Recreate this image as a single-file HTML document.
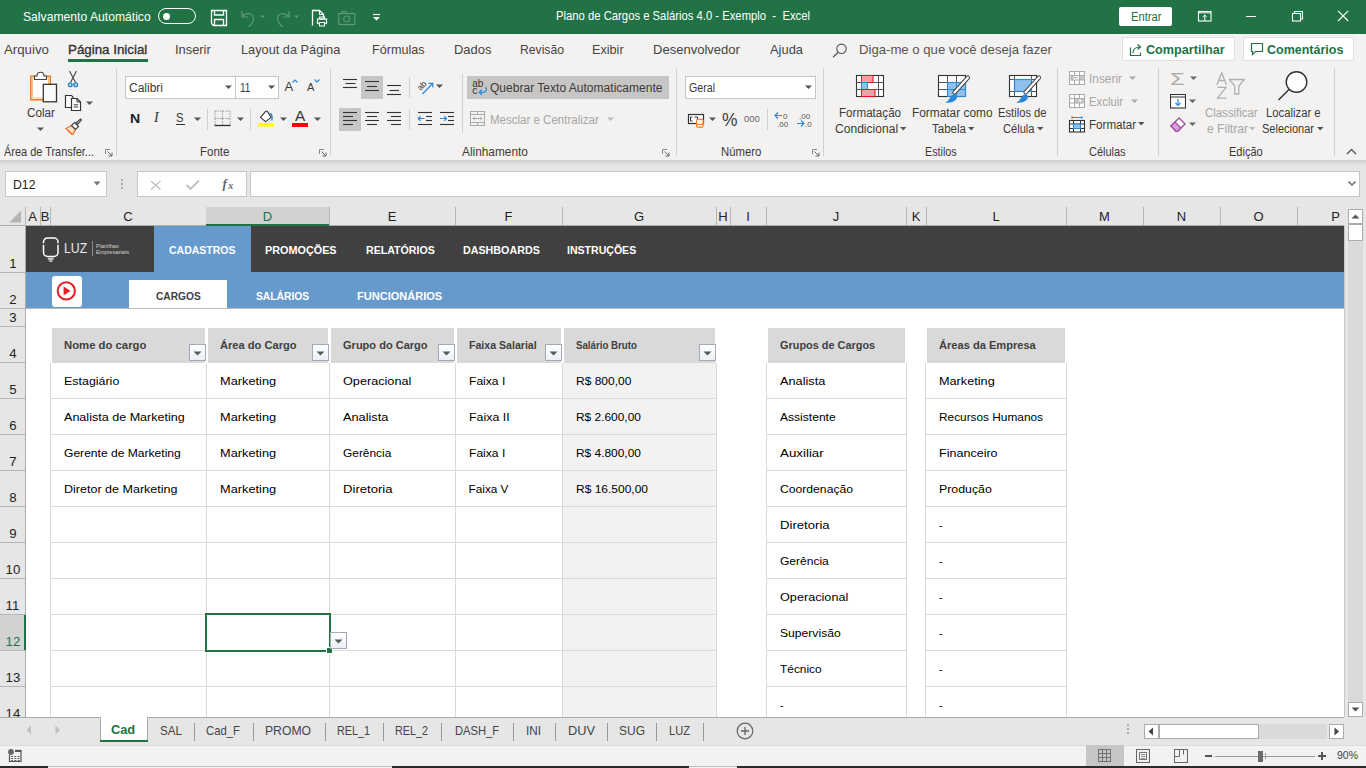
<!DOCTYPE html>
<html><head><meta charset="utf-8"><title>Excel</title>
<style>
html,body{margin:0;padding:0;width:1366px;height:768px;overflow:hidden;position:relative;background:#f3f2f1;font-family:"Liberation Sans",sans-serif}
body>div,body>svg,body>span{position:absolute;box-sizing:border-box}
.t{white-space:pre;line-height:1;transform-origin:0 0}

</style></head><body>
<div style="left:0px;top:0px;width:1366px;height:34px;background:#217346"></div>
<span class="t" style="left:23.00px;top:11.19px;font-size:12.60px;color:#fff;font-weight:400;font-family:'Liberation Sans',sans-serif;transform:scaleX(0.9651);">Salvamento Automático</span>
<div style="left:158px;top:8px;width:38px;height:16px;border:1.3px solid #fff;border-radius:8px"></div>
<div style="left:162.5px;top:12.5px;width:7px;height:7px;background:#fff;border-radius:50%"></div>
<svg style="left:210px;top:9px;" width="18" height="18" viewBox="0 0 18 18"><path d="M1.5 1.5h15v15h-13l-2-2z" fill="none" stroke="#fff" stroke-width="1.3"/><path d="M4.5 1.5v4.5h9v-4.5M4.5 16.5v-6h9v6" fill="none" stroke="#fff" stroke-width="1.3"/></svg>
<svg style="left:239px;top:9px;" width="30" height="18" viewBox="0 0 30 18"><path d="M3 2v6h6" fill="none" stroke="#5e9a76" stroke-width="1.2"/><path d="M3.5 7.5c3-4 10-4 11 1.5 0.5 3-1 5-5 9" fill="none" stroke="#5e9a76" stroke-width="1.2"/><path d="M21 6.5l2.5 2.5 2.5-2.5z" fill="#5e9a76"/></svg>
<svg style="left:274px;top:9px;" width="30" height="18" viewBox="0 0 30 18"><path d="M15 2v6h-6" fill="none" stroke="#5e9a76" stroke-width="1.2"/><path d="M14.5 7.5c-3-4 -10-4 -11 1.5 -0.5 3 1 5 5 9" fill="none" stroke="#5e9a76" stroke-width="1.2"/><path d="M20 6.5l2.5 2.5 2.5-2.5z" fill="#5e9a76"/></svg>
<svg style="left:311px;top:9px;" width="17" height="18" viewBox="0 0 17 18"><path d="M1.5 16.5v-15h7l4 4v3" fill="none" stroke="#fff" stroke-width="1.3"/><path d="M8.5 1.5v4h4" fill="none" stroke="#fff" stroke-width="1.1"/><rect x="6.5" y="10" width="9" height="4.5" fill="none" stroke="#fff" stroke-width="1.2"/><rect x="8.5" y="8" width="5" height="2" fill="none" stroke="#fff" stroke-width="1"/><rect x="8.5" y="13.5" width="5" height="3.5" fill="#217346" stroke="#fff" stroke-width="1"/></svg>
<svg style="left:338px;top:10px;" width="18" height="16" viewBox="0 0 18 16"><rect x="0.7" y="3.5" width="16" height="11" fill="none" stroke="#5e9a76" stroke-width="1.2"/><circle cx="8.7" cy="9" r="3" fill="none" stroke="#5e9a76" stroke-width="1.2"/><path d="M4 3.5v-2h4v2" fill="none" stroke="#5e9a76" stroke-width="1.1"/></svg>
<svg style="left:372px;top:13px;" width="10" height="8" viewBox="0 0 10 8"><path d="M1 1.5h7" stroke="#fff" stroke-width="1.2"/><path d="M1 4l3.5 3.5 3.5-3.5z" fill="#fff"/></svg>
<span class="t" style="left:555.50px;top:10.22px;font-size:12.80px;color:#fff;font-weight:400;font-family:'Liberation Sans',sans-serif;transform:scaleX(0.8817);">Plano de Cargos e Salários 4.0 - Exemplo  -  Excel</span>
<div style="left:1119px;top:7px;width:53px;height:19px;background:#fff;border-radius:2px"></div>
<span class="t" style="left:1130.50px;top:11.04px;font-size:12.30px;color:#217346;font-weight:400;font-family:'Liberation Sans',sans-serif;transform:scaleX(0.9104);">Entrar</span>
<svg style="left:1197px;top:10px;" width="16" height="12" viewBox="0 0 16 12"><rect x="1.5" y="1.5" width="12.5" height="9.5" fill="none" stroke="#fff" stroke-width="1.1"/><path d="M1.5 2.8h12.5" stroke="#fff" stroke-width="1"/><path d="M7.75 11v-6M5.7 7l2.05-2 2.05 2" fill="none" stroke="#fff" stroke-width="1"/></svg>
<div style="left:1246px;top:16px;width:10px;height:1.2px;background:#fff"></div>
<svg style="left:1291px;top:10px;" width="13" height="12" viewBox="0 0 13 12"><rect x="1.5" y="3.5" width="8" height="7.5" fill="none" stroke="#fff" stroke-width="1.1"/><path d="M3.5 3.5v-2h8v7.5h-2" fill="none" stroke="#fff" stroke-width="1.1"/></svg>
<svg style="left:1337px;top:10px;" width="12" height="12" viewBox="0 0 12 12"><path d="M1 0.8l10.2 10.2M11.2 0.8L1 11" stroke="#fff" stroke-width="1.1"/></svg>
<span class="t" style="left:68.30px;top:42.99px;font-size:13.30px;color:#333;font-weight:400;font-family:'Liberation Sans',sans-serif;transform:scaleX(1.0026);-webkit-text-stroke:0.35px #333">Página Inicial</span>
<span class="t" style="left:3.70px;top:42.99px;font-size:13.30px;color:#444;font-weight:400;font-family:'Liberation Sans',sans-serif;transform:scaleX(0.9957);">Arquivo</span>
<span class="t" style="left:175.30px;top:42.99px;font-size:13.30px;color:#444;font-weight:400;font-family:'Liberation Sans',sans-serif;transform:scaleX(0.9661);">Inserir</span>
<span class="t" style="left:241.40px;top:42.99px;font-size:13.30px;color:#444;font-weight:400;font-family:'Liberation Sans',sans-serif;transform:scaleX(0.9593);">Layout da Página</span>
<span class="t" style="left:371.90px;top:42.99px;font-size:13.30px;color:#444;font-weight:400;font-family:'Liberation Sans',sans-serif;transform:scaleX(0.9509);">Fórmulas</span>
<span class="t" style="left:454.40px;top:42.99px;font-size:13.30px;color:#444;font-weight:400;font-family:'Liberation Sans',sans-serif;transform:scaleX(0.9730);">Dados</span>
<span class="t" style="left:519.50px;top:42.99px;font-size:13.30px;color:#444;font-weight:400;font-family:'Liberation Sans',sans-serif;transform:scaleX(0.9158);">Revisão</span>
<span class="t" style="left:592.00px;top:42.99px;font-size:13.30px;color:#444;font-weight:400;font-family:'Liberation Sans',sans-serif;transform:scaleX(0.9504);">Exibir</span>
<span class="t" style="left:653.20px;top:42.99px;font-size:13.30px;color:#444;font-weight:400;font-family:'Liberation Sans',sans-serif;transform:scaleX(0.9797);">Desenvolvedor</span>
<span class="t" style="left:769.70px;top:42.99px;font-size:13.30px;color:#444;font-weight:400;font-family:'Liberation Sans',sans-serif;transform:scaleX(0.9701);">Ajuda</span>
<div style="left:68px;top:59px;width:80px;height:3px;background:#217346"></div>
<svg style="left:832px;top:43px;" width="16" height="15" viewBox="0 0 16 15"><circle cx="9.5" cy="5.8" r="4.7" fill="none" stroke="#555" stroke-width="1.1"/><path d="M6.2 9.2L1 14.2" stroke="#555" stroke-width="1.2"/></svg>
<span class="t" style="left:859.40px;top:42.99px;font-size:13.30px;color:#555;font-weight:400;font-family:'Liberation Sans',sans-serif;transform:scaleX(0.9885);">Diga-me o que você deseja fazer</span>
<div style="left:1122px;top:37px;width:113px;height:24px;background:#fff;border:1px solid #e1dfdd;border-radius:2px"></div>
<svg style="left:1129px;top:42px;" width="14" height="15" viewBox="0 0 14 15"><path d="M1.5 5.5v8h10v-3" fill="none" stroke="#217346" stroke-width="1.2"/><path d="M4 11c0-4 3-6 7-6M8.5 2.5l3 2.5-3 2.5" fill="none" stroke="#217346" stroke-width="1.2"/></svg>
<span class="t" style="left:1146.00px;top:42.94px;font-size:13.60px;color:#217346;font-weight:700;font-family:'Liberation Sans',sans-serif;transform:scaleX(0.9290);">Compartilhar</span>
<div style="left:1243px;top:37px;width:111px;height:24px;background:#fff;border:1px solid #e1dfdd;border-radius:2px"></div>
<svg style="left:1250px;top:42px;" width="14" height="14" viewBox="0 0 14 14"><path d="M1.5 1.5h11v8h-7l-3 3v-3h-1z" fill="none" stroke="#217346" stroke-width="1.2"/></svg>
<span class="t" style="left:1267.00px;top:42.94px;font-size:13.60px;color:#217346;font-weight:700;font-family:'Liberation Sans',sans-serif;transform:scaleX(0.9194);">Comentários</span>
<div style="left:116px;top:68px;width:1px;height:88px;background:#d2d0ce"></div>
<div style="left:330px;top:68px;width:1px;height:88px;background:#d2d0ce"></div>
<div style="left:676px;top:68px;width:1px;height:88px;background:#d2d0ce"></div>
<div style="left:823px;top:68px;width:1px;height:88px;background:#d2d0ce"></div>
<div style="left:1057px;top:68px;width:1px;height:88px;background:#d2d0ce"></div>
<div style="left:1158px;top:68px;width:1px;height:88px;background:#d2d0ce"></div>
<div style="left:1334px;top:68px;width:1px;height:88px;background:#d2d0ce"></div>
<span class="t" style="left:4.00px;top:146.04px;font-size:12.30px;color:#3b3a39;font-weight:400;font-family:'Liberation Sans',sans-serif;transform:scaleX(0.8896);">Área de Transfer...</span>
<span class="t" style="left:200.30px;top:146.04px;font-size:12.30px;color:#3b3a39;font-weight:400;font-family:'Liberation Sans',sans-serif;transform:scaleX(0.9347);">Fonte</span>
<span class="t" style="left:461.80px;top:146.04px;font-size:12.30px;color:#3b3a39;font-weight:400;font-family:'Liberation Sans',sans-serif;transform:scaleX(0.9638);">Alinhamento</span>
<span class="t" style="left:721.40px;top:146.04px;font-size:12.30px;color:#3b3a39;font-weight:400;font-family:'Liberation Sans',sans-serif;transform:scaleX(0.9234);">Número</span>
<span class="t" style="left:924.70px;top:146.04px;font-size:12.30px;color:#3b3a39;font-weight:400;font-family:'Liberation Sans',sans-serif;transform:scaleX(0.8725);">Estilos</span>
<span class="t" style="left:1089.00px;top:146.04px;font-size:12.30px;color:#3b3a39;font-weight:400;font-family:'Liberation Sans',sans-serif;transform:scaleX(0.8923);">Células</span>
<span class="t" style="left:1229.00px;top:146.04px;font-size:12.30px;color:#3b3a39;font-weight:400;font-family:'Liberation Sans',sans-serif;transform:scaleX(0.8961);">Edição</span>
<svg style="left:105px;top:149px;" width="8" height="8" viewBox="0 0 8 8"><path d="M0.5 5V0.5H5" stroke="#888" stroke-width="1" fill="none"/><path d="M2.5 2.5l4.5 4.5M7 3.5v3.5H3.5" stroke="#666" stroke-width="1" fill="none"/></svg>
<svg style="left:319px;top:149px;" width="8" height="8" viewBox="0 0 8 8"><path d="M0.5 5V0.5H5" stroke="#888" stroke-width="1" fill="none"/><path d="M2.5 2.5l4.5 4.5M7 3.5v3.5H3.5" stroke="#666" stroke-width="1" fill="none"/></svg>
<svg style="left:662px;top:149px;" width="8" height="8" viewBox="0 0 8 8"><path d="M0.5 5V0.5H5" stroke="#888" stroke-width="1" fill="none"/><path d="M2.5 2.5l4.5 4.5M7 3.5v3.5H3.5" stroke="#666" stroke-width="1" fill="none"/></svg>
<svg style="left:812px;top:149px;" width="8" height="8" viewBox="0 0 8 8"><path d="M0.5 5V0.5H5" stroke="#888" stroke-width="1" fill="none"/><path d="M2.5 2.5l4.5 4.5M7 3.5v3.5H3.5" stroke="#666" stroke-width="1" fill="none"/></svg>
<svg style="left:1346px;top:148px;" width="11" height="7" viewBox="0 0 11 7"><path d="M1 6l4.5-4.5 4.5 4.5" fill="none" stroke="#555" stroke-width="1.3"/></svg>
<svg style="left:29px;top:70px;" width="29" height="33" viewBox="0 0 29 33"><rect x="1.8" y="6.3" width="19.5" height="23.5" fill="#fbf3e6" stroke="#ed7d31" stroke-width="1.5"/><rect x="3.5" y="8" width="16" height="20" fill="#fff" stroke="#f5c77e" stroke-width="1"/><path d="M5.5 9.5v-3.5h2.5c0-2.5 1.5-3.8 3.5-3.8s3.5 1.3 3.5 3.8h2.5v3.5z" fill="#fff" stroke="#444" stroke-width="1.1"/><rect x="14.3" y="14.3" width="13.2" height="17.5" fill="#fafafa" stroke="#333" stroke-width="1.3"/></svg>
<span class="t" style="left:27.30px;top:107.05px;font-size:12.30px;color:#3b3a39;font-weight:400;font-family:'Liberation Sans',sans-serif;transform:scaleX(0.9527);">Colar</span>
<svg style="left:37px;top:126.5px;" width="8" height="5" viewBox="0 0 8 5"><path d="M0 0.5h7l-3.5 3.5z" fill="#555"/></svg>
<svg style="left:66px;top:70px;" width="14" height="18" viewBox="0 0 14 18"><path d="M4.5 12.5L10.5 1M9.5 12.5L3.5 1" stroke="#444" stroke-width="1.1"/><circle cx="4.3" cy="14.8" r="1.8" fill="none" stroke="#2b88d8" stroke-width="1.5"/><circle cx="9.7" cy="14.8" r="1.8" fill="none" stroke="#2b88d8" stroke-width="1.5"/></svg>
<svg style="left:64px;top:94px;" width="19" height="18" viewBox="0 0 19 18"><path d="M1.5 1.5h6l1.5 1.5v10.5h-7.5z" fill="#fff" stroke="#333" stroke-width="1.2"/><path d="M7.5 4.5h5.5l3.5 3.5v8.5h-9z" fill="#fff" stroke="#333" stroke-width="1.2"/><path d="M13 4.5v3.5h3.5" fill="none" stroke="#333" stroke-width="1"/><path d="M9.7 10.8h4.5M9.7 13h4.5" stroke="#333" stroke-width="1"/></svg>
<svg style="left:86px;top:101px;" width="8" height="5" viewBox="0 0 8 5"><path d="M0 0.5h7l-3.5 3.5z" fill="#555"/></svg>
<svg style="left:65px;top:118px;" width="17" height="17" viewBox="0 0 17 17"><path d="M1 10.5l5.5-3 4 4-3 5.5z" fill="#fbe0c4" stroke="#ed7d31" stroke-width="1.4"/><path d="M3 12.5l4 3.5" stroke="#ed7d31" stroke-width="1.3"/><path d="M6.5 7.5l3-3 4 4-3 3z" fill="#fff" stroke="#444" stroke-width="1.2"/><path d="M11 5l4.5-4 1 1-4 4.5z" fill="#fff" stroke="#444" stroke-width="1.2"/></svg>
<div style="left:125px;top:76px;width:111px;height:23px;background:#fff;border:1px solid #c8c6c4"></div>
<div style="left:235px;top:76px;width:44px;height:23px;background:#fff;border:1px solid #c8c6c4"></div>
<span class="t" style="left:128.70px;top:81.55px;font-size:12.30px;color:#3b3a39;font-weight:400;font-family:'Liberation Sans',sans-serif;transform:scaleX(0.9753);">Calibri</span>
<span class="t" style="left:239.80px;top:81.55px;font-size:12.30px;color:#3b3a39;font-weight:400;font-family:'Liberation Sans',sans-serif;transform:scaleX(0.8225);">11</span>
<svg style="left:225px;top:85px;" width="8" height="5" viewBox="0 0 8 5"><path d="M0 0.5h7l-3.5 3.5z" fill="#555"/></svg>
<svg style="left:268px;top:85px;" width="8" height="5" viewBox="0 0 8 5"><path d="M0 0.5h7l-3.5 3.5z" fill="#555"/></svg>
<span class="t" style="left:284.50px;top:79.95px;font-size:13.00px;color:#3b3a39;font-weight:400;font-family:'Liberation Sans',sans-serif;">A</span>
<svg style="left:292px;top:79px;" width="6" height="4" viewBox="0 0 6 4"><path d="M0.5 3.5l2.5-2.5 2.5 2.5" fill="none" stroke="#2b88d8" stroke-width="1.1"/></svg>
<span class="t" style="left:307.00px;top:81.65px;font-size:11.00px;color:#3b3a39;font-weight:400;font-family:'Liberation Sans',sans-serif;">A</span>
<svg style="left:314px;top:79px;" width="6" height="4" viewBox="0 0 6 4"><path d="M0.5 0.5l2.5 2.5 2.5-2.5" fill="none" stroke="#2b88d8" stroke-width="1.1"/></svg>
<span class="t" style="left:130.20px;top:111.78px;font-size:13.20px;color:#222;font-weight:700;font-family:'Liberation Sans',sans-serif;transform:scaleX(1.0702);">N</span>
<span class="t" style="left:154.00px;top:111.10px;font-size:14.00px;color:#333;font-weight:400;font-family:'Liberation Serif',sans-serif;font-style:italic">I</span>
<span class="t" style="left:176.30px;top:111.88px;font-size:12.50px;color:#333;font-weight:400;font-family:'Liberation Sans',sans-serif;transform:scaleX(0.8989);">S</span>
<div style="left:176px;top:124px;width:9px;height:1px;background:#333"></div>
<svg style="left:194px;top:117px;" width="8" height="5" viewBox="0 0 8 5"><path d="M0 0.5h7l-3.5 3.5z" fill="#555"/></svg>
<svg style="left:237px;top:117px;" width="8" height="5" viewBox="0 0 8 5"><path d="M0 0.5h7l-3.5 3.5z" fill="#555"/></svg>
<svg style="left:280px;top:117px;" width="8" height="5" viewBox="0 0 8 5"><path d="M0 0.5h7l-3.5 3.5z" fill="#555"/></svg>
<svg style="left:314px;top:117px;" width="8" height="5" viewBox="0 0 8 5"><path d="M0 0.5h7l-3.5 3.5z" fill="#555"/></svg>
<div style="left:207px;top:109px;width:1px;height:21px;background:#d2d0ce"></div>
<div style="left:250px;top:109px;width:1px;height:21px;background:#d2d0ce"></div>
<svg style="left:214px;top:110px;" width="17" height="17" viewBox="0 0 17 17"><path d="M1 1h15v15M1 1v15M8.5 1v15M1 8.5h15" fill="none" stroke="#999" stroke-width="1" stroke-dasharray="1.5 1"/><path d="M0.5 15.5h16" stroke="#333" stroke-width="1.3"/></svg>
<svg style="left:257px;top:108px;" width="18" height="19" viewBox="0 0 18 19"><path d="M3.5 9.4L8.6 3.3h1.7l3.8 6.1-5.5 4.2z" fill="#fff" stroke="#333" stroke-width="1.1" stroke-linejoin="round"/><path d="M13 5.5c1.8 0.3 2.5 3 1.8 7" fill="none" stroke="#2b88d8" stroke-width="1.5"/><rect x="0.8" y="15" width="16.2" height="3.5" fill="#ffff00"/></svg>
<span class="t" style="left:294.80px;top:109.47px;font-size:14.50px;color:#333;font-weight:400;font-family:'Liberation Sans',sans-serif;transform:scaleX(1.0546);">A</span>
<div style="left:291.5px;top:123px;width:16.5px;height:3.5px;background:#ff0000"></div>
<div style="left:361px;top:76px;width:22px;height:23px;background:#c8c6c4"></div>
<div style="left:339px;top:108px;width:22px;height:23px;background:#c8c6c4"></div>
<div style="left:467px;top:76px;width:202px;height:23px;background:#c8c6c4"></div>
<svg style="left:335px;top:70px" width="130" height="65" viewBox="335 70 130 65"><path d="M343 79.5h14" stroke="#333" stroke-width="1.1"/><path d="M345.5 83.5h10.0" stroke="#333" stroke-width="1.1"/><path d="M343 87.5h14" stroke="#333" stroke-width="1.1"/><path d="M365 81.5h14" stroke="#333" stroke-width="1.1"/><path d="M367 86.5h10" stroke="#333" stroke-width="1.1"/><path d="M365 90.5h14" stroke="#333" stroke-width="1.1"/><path d="M387 85.5h14" stroke="#333" stroke-width="1.1"/><path d="M389.5 90.5h9.5" stroke="#333" stroke-width="1.1"/><path d="M387 94.5h14" stroke="#333" stroke-width="1.1"/><path d="M343 112.5h14" stroke="#333" stroke-width="1.1"/><path d="M343 116.5h10" stroke="#333" stroke-width="1.1"/><path d="M343 120.5h14" stroke="#333" stroke-width="1.1"/><path d="M343 124.5h10" stroke="#333" stroke-width="1.1"/><path d="M365 112.5h14" stroke="#333" stroke-width="1.1"/><path d="M367 116.5h10" stroke="#333" stroke-width="1.1"/><path d="M365 120.5h14" stroke="#333" stroke-width="1.1"/><path d="M367 124.5h10" stroke="#333" stroke-width="1.1"/><path d="M387 112.5h14" stroke="#333" stroke-width="1.1"/><path d="M391 116.5h10" stroke="#333" stroke-width="1.1"/><path d="M387 120.5h14" stroke="#333" stroke-width="1.1"/><path d="M391 124.5h10" stroke="#333" stroke-width="1.1"/><path d="M418 112.5h14" stroke="#333" stroke-width="1.1"/><path d="M426 116.5h6" stroke="#333" stroke-width="1.1"/><path d="M426 120.5h6" stroke="#333" stroke-width="1.1"/><path d="M418 124.5h14" stroke="#333" stroke-width="1.1"/><path d="M418 118.5h6.5M420.5 116.3L418.2 118.5l2.3 2.2" fill="none" stroke="#2b88d8" stroke-width="1.2"/><path d="M440 112.5h14" stroke="#333" stroke-width="1.1"/><path d="M448 116.5h6" stroke="#333" stroke-width="1.1"/><path d="M448 120.5h6" stroke="#333" stroke-width="1.1"/><path d="M440 124.5h14" stroke="#333" stroke-width="1.1"/><path d="M440 118.5h6.5M444.2 116.3L446.5 118.5l-2.3 2.2" fill="none" stroke="#2b88d8" stroke-width="1.2"/><text x="0" y="0" font-size="8.5" font-family="Liberation Sans" fill="#333" transform="translate(420.5 91) rotate(-45)">ab</text><path d="M422.5 94l10-10.5M428.5 83.3h4.3v4.3" fill="none" stroke="#2b88d8" stroke-width="1.2"/></svg>
<div style="left:409px;top:77px;width:1px;height:21px;background:#d2d0ce"></div>
<div style="left:409px;top:109px;width:1px;height:21px;background:#d2d0ce"></div>
<svg style="left:436px;top:84px;" width="8" height="5" viewBox="0 0 8 5"><path d="M0 0.5h7l-3.5 3.5z" fill="#555"/></svg>
<div style="left:462px;top:74px;width:1px;height:59px;background:#d2d0ce"></div>
<svg style="left:470px;top:78px;" width="19" height="18" viewBox="0 0 19 18"><text x="2.3" y="8.8" font-size="10" font-family="Liberation Sans" fill="#333">ab</text><text x="2.3" y="15.6" font-size="10" font-family="Liberation Sans" fill="#333">c</text><path d="M15.5 9.3c1.8 1.5 1 5-2 5H9.5M11.8 11.8L9.3 14.3l2.5 2.5" fill="none" stroke="#2b88d8" stroke-width="1.3"/></svg>
<span class="t" style="left:489.50px;top:81.55px;font-size:12.30px;color:#3b3a39;font-weight:400;font-family:'Liberation Sans',sans-serif;transform:scaleX(0.9794);">Quebrar Texto Automaticamente</span>
<svg style="left:469px;top:110px;" width="17" height="17" viewBox="0 0 17 17"><rect x="1.5" y="1.5" width="14" height="14" fill="none" stroke="#aaa" stroke-width="1"/><path d="M1.5 4.5h14M1.5 12.5h14M8.5 1.5v3M8.5 12.5v3M4 8.5h9M5.8 6.7L4 8.5l1.8 1.8M11.2 6.7L13 8.5l-1.8 1.8" fill="none" stroke="#aaa" stroke-width="1"/></svg>
<span class="t" style="left:489.50px;top:113.55px;font-size:12.30px;color:#a6a6a6;font-weight:400;font-family:'Liberation Sans',sans-serif;transform:scaleX(0.9364);">Mesclar e Centralizar</span>
<svg style="left:607px;top:117px;" width="8" height="5" viewBox="0 0 8 5"><path d="M0 0.5h7l-3.5 3.5z" fill="#bbb"/></svg>
<div style="left:685px;top:76px;width:131px;height:23px;background:#fff;border:1px solid #c8c6c4"></div>
<span class="t" style="left:688.90px;top:81.55px;font-size:12.30px;color:#3b3a39;font-weight:400;font-family:'Liberation Sans',sans-serif;transform:scaleX(0.8644);">Geral</span>
<svg style="left:805px;top:85px;" width="8" height="5" viewBox="0 0 8 5"><path d="M0 0.5h7l-3.5 3.5z" fill="#555"/></svg>
<svg style="left:687px;top:113px;" width="18" height="15" viewBox="0 0 18 15"><rect x="1.5" y="1.5" width="15" height="9" fill="#fff" stroke="#333" stroke-width="1.2"/><path d="M5.5 4h-2v4h2M7.5 4h3v4" fill="none" stroke="#333" stroke-width="1"/><ellipse cx="12.8" cy="7.5" rx="3.3" ry="1.4" fill="#fff" stroke="#ed7d31" stroke-width="1.1"/><path d="M9.5 7.5v5.5c0 1.8 6.6 1.8 6.6 0v-5.5M9.5 10.2c0 1.8 6.6 1.8 6.6 0" fill="#fff" stroke="#ed7d31" stroke-width="1.1"/></svg>
<svg style="left:709px;top:117px;" width="8" height="5" viewBox="0 0 8 5"><path d="M0 0.5h7l-3.5 3.5z" fill="#555"/></svg>
<span class="t" style="left:721.80px;top:110.70px;font-size:18.00px;color:#3a3a3a;font-weight:400;font-family:'Liberation Sans',sans-serif;transform:scaleX(0.9678);">%</span>
<span class="t" style="left:743.80px;top:114.04px;font-size:9.60px;color:#666;font-weight:400;font-family:'Liberation Sans',sans-serif;transform:scaleX(0.9865);">000</span>
<div style="left:767px;top:109px;width:1px;height:21px;background:#d2d0ce"></div>
<svg style="left:774px;top:111px;" width="17" height="16" viewBox="0 0 17 16"><path d="M1 4.5h7M4 1.5L1 4.5l3 3" fill="none" stroke="#2b88d8" stroke-width="1.2"/><text x="9" y="8" font-size="8" font-family="Liberation Sans" fill="#555">0</text><text x="3" y="15.5" font-size="8" font-family="Liberation Sans" fill="#555">,00</text></svg>
<svg style="left:796px;top:111px;" width="17" height="16" viewBox="0 0 17 16"><text x="3" y="7.5" font-size="8" font-family="Liberation Sans" fill="#555">,00</text><path d="M1 12.5h7M5 9.5l3 3-3 3" fill="none" stroke="#2b88d8" stroke-width="1.2"/><text x="9" y="15.5" font-size="8" font-family="Liberation Sans" fill="#555">,0</text></svg>
<svg style="left:855px;top:74px;" width="30" height="24" viewBox="0 0 30 24"><rect x="1.5" y="1.5" width="27" height="21" fill="#fff" stroke="#333" stroke-width="1.1"/><path d="M6.5 1.5v21M23.5 1.5v21M1.5 8.5h27M1.5 15.5h27" stroke="#555" stroke-width="1" fill="none"/><rect x="6.5" y="1.5" width="11.5" height="7" fill="#f4a0a8" stroke="#e81123" stroke-width="1"/><rect x="6.5" y="8.5" width="6" height="7" fill="#8fc1ee" stroke="#2b88d8" stroke-width="1"/><rect x="6.5" y="15.5" width="13.5" height="7" fill="#f4a0a8" stroke="#e81123" stroke-width="1"/></svg>
<span class="t" style="left:839.40px;top:106.97px;font-size:12.50px;color:#3b3a39;font-weight:400;font-family:'Liberation Sans',sans-serif;transform:scaleX(0.9310);">Formatação</span>
<span class="t" style="left:834.50px;top:122.97px;font-size:12.50px;color:#3b3a39;font-weight:400;font-family:'Liberation Sans',sans-serif;transform:scaleX(0.9659);">Condicional</span>
<svg style="left:900px;top:127px;" width="7" height="4" viewBox="0 0 7 4"><path d="M0 0h6.5l-3.25 3.5z" fill="#555"/></svg>
<svg style="left:937px;top:74px;" width="34" height="30" viewBox="0 0 34 30"><rect x="1.5" y="1.5" width="27" height="21" fill="#fff" stroke="#333" stroke-width="1.1"/><path d="M10.5 1.5v21M19.5 1.5v21M1.5 8.5h27M1.5 15.5h27" stroke="#555" stroke-width="1" fill="none"/><rect x="10.5" y="8.5" width="18" height="14" fill="#8fc1ee" stroke="#2b88d8" stroke-width="1.1"/><path d="M19.5 8.5v14M10.5 15.5h18" stroke="#2b88d8" stroke-width="1"/><path d="M31 3.5L17.5 18.5" stroke="#444" stroke-width="4.2" stroke-linecap="round"/><path d="M31 3.5L17.5 18.5" stroke="#fff" stroke-width="2.2" stroke-linecap="round"/><path d="M8 28.5c2.5-0.5 4-3 5.5-5.5 1.5-2.5 4-3.5 6-2 1.5 1.5 0.5 4-1.5 5.5-2.5 2-6 2.5-10 2z" fill="#2b88d8"/></svg>
<span class="t" style="left:911.50px;top:106.97px;font-size:12.50px;color:#3b3a39;font-weight:400;font-family:'Liberation Sans',sans-serif;transform:scaleX(0.9499);">Formatar como</span>
<span class="t" style="left:932.00px;top:122.97px;font-size:12.50px;color:#3b3a39;font-weight:400;font-family:'Liberation Sans',sans-serif;transform:scaleX(0.9228);">Tabela</span>
<svg style="left:968px;top:127px;" width="7" height="4" viewBox="0 0 7 4"><path d="M0 0h6.5l-3.25 3.5z" fill="#555"/></svg>
<svg style="left:1008px;top:74px;" width="34" height="30" viewBox="0 0 34 30"><rect x="1.5" y="1.5" width="27" height="21" fill="#fff" stroke="#333" stroke-width="1.1"/><path d="M6.5 1.5v21M23.5 1.5v21M1.5 5.5h27M1.5 17.5h27" stroke="#555" stroke-width="1" fill="none"/><rect x="6.5" y="5.5" width="17" height="12" fill="#8fc1ee" stroke="#2b88d8" stroke-width="1.2"/><path d="M31 3.5L17.5 18.5" stroke="#444" stroke-width="4.2" stroke-linecap="round"/><path d="M31 3.5L17.5 18.5" stroke="#fff" stroke-width="2.2" stroke-linecap="round"/><path d="M8 28.5c2.5-0.5 4-3 5.5-5.5 1.5-2.5 4-3.5 6-2 1.5 1.5 0.5 4-1.5 5.5-2.5 2-6 2.5-10 2z" fill="#2b88d8"/></svg>
<span class="t" style="left:998.40px;top:106.97px;font-size:12.50px;color:#3b3a39;font-weight:400;font-family:'Liberation Sans',sans-serif;transform:scaleX(0.8966);">Estilos de</span>
<span class="t" style="left:1002.70px;top:122.97px;font-size:12.50px;color:#3b3a39;font-weight:400;font-family:'Liberation Sans',sans-serif;transform:scaleX(0.8889);">Célula</span>
<svg style="left:1037px;top:127px;" width="7" height="4" viewBox="0 0 7 4"><path d="M0 0h6.5l-3.25 3.5z" fill="#555"/></svg>
<svg style="left:1068px;top:70px;" width="18" height="16" viewBox="0 0 18 16"><rect x="1.5" y="1.5" width="15" height="13" fill="#fff" stroke="#aaa"/><rect x="11.5" y="5.5" width="5" height="4.5" fill="#c8c8c8"/><path d="M6.5 1.5v4M6.5 10v4.5M11.5 1.5v13M1.5 5.5h15M1.5 10h15" stroke="#aaa" fill="none"/><path d="M10 7.8H2.8M5 5.6L2.8 7.8 5 10" fill="none" stroke="#aaa" stroke-width="1.1"/></svg>
<span class="t" style="left:1088.70px;top:72.55px;font-size:12.30px;color:#a6a6a6;font-weight:400;font-family:'Liberation Sans',sans-serif;transform:scaleX(0.9657);">Inserir</span>
<svg style="left:1129px;top:76px;" width="8" height="5" viewBox="0 0 8 5"><path d="M0 0.5h7l-3.5 3.5z" fill="#aaa"/></svg>
<svg style="left:1068px;top:93px;" width="18" height="16" viewBox="0 0 18 16"><rect x="1.5" y="1.5" width="15" height="13" fill="#fff" stroke="#aaa"/><rect x="6.5" y="5.5" width="5" height="4.5" fill="#c8c8c8"/><path d="M6.5 1.5v13M11.5 1.5v4M11.5 10v4.5M1.5 5.5h15M1.5 10h15" stroke="#aaa" fill="none"/><path d="M12.5 5.5l4 4.5M16.5 5.5l-4 4.5" stroke="#aaa" stroke-width="1.1"/></svg>
<span class="t" style="left:1088.70px;top:95.55px;font-size:12.30px;color:#a6a6a6;font-weight:400;font-family:'Liberation Sans',sans-serif;transform:scaleX(0.9213);">Excluir</span>
<svg style="left:1131px;top:99px;" width="8" height="5" viewBox="0 0 8 5"><path d="M0 0.5h7l-3.5 3.5z" fill="#aaa"/></svg>
<svg style="left:1068px;top:116px;" width="18" height="17" viewBox="0 0 18 17"><rect x="1.5" y="4.5" width="15" height="11.5" fill="#fff" stroke="#333" stroke-width="1.1"/><path d="M1.5 8h15M1.5 12.5h15M5.5 4.5v11.5M12.5 4.5v11.5" stroke="#333" fill="none"/><rect x="5.5" y="8" width="7" height="4.5" fill="#8fc1ee" stroke="#2b88d8"/><path d="M4 1.5h10M4 0.3v2.4M14 0.3v2.4" stroke="#2b88d8" stroke-width="1.1"/></svg>
<span class="t" style="left:1088.70px;top:118.55px;font-size:12.30px;color:#3b3a39;font-weight:400;font-family:'Liberation Sans',sans-serif;transform:scaleX(0.9421);">Formatar</span>
<svg style="left:1138px;top:122px;" width="7" height="4" viewBox="0 0 7 4"><path d="M0 0h6.5l-3.25 3.5z" fill="#555"/></svg>
<span class="t" style="left:1170.00px;top:70.55px;font-size:17.00px;color:#aaa;font-weight:400;font-family:'Liberation Sans',sans-serif;transform:scaleX(1.4264);">Σ</span>
<svg style="left:1190px;top:76px;" width="8" height="5" viewBox="0 0 8 5"><path d="M0 0.5h7l-3.5 3.5z" fill="#666"/></svg>
<svg style="left:1170px;top:94px;" width="16" height="15" viewBox="0 0 16 15"><rect x="0.5" y="0.5" width="15" height="13.5" fill="#fff" stroke="#333" stroke-width="1.1"/><path d="M0.5 3h15" stroke="#333"/><path d="M8 5v6.5M5.5 9l2.5 2.5 2.5-2.5" fill="none" stroke="#2b88d8" stroke-width="1.2"/></svg>
<svg style="left:1189px;top:99px;" width="8" height="5" viewBox="0 0 8 5"><path d="M0 0.5h7l-3.5 3.5z" fill="#666"/></svg>
<svg style="left:1170px;top:116px;" width="17" height="16" viewBox="0 0 17 16"><path d="M1 10l8-8 6 6-8 8z" fill="#fff" stroke="#a349a4" stroke-width="1.4"/><path d="M1 10l4 6 3 0-4-6z" fill="#c47fc5"/><path d="M1 10l4-4 6 6-4 4z" fill="#d6a3d7" stroke="#a349a4" stroke-width="1.2"/></svg>
<svg style="left:1189px;top:122px;" width="8" height="5" viewBox="0 0 8 5"><path d="M0 0.5h7l-3.5 3.5z" fill="#666"/></svg>
<svg style="left:1216px;top:72px;" width="30" height="28" viewBox="0 0 30 28"><path d="M1 12.8L5.7 0.8 10.4 12.8M2.8 8.5h5.8" fill="none" stroke="#b0b0b0" stroke-width="1.3"/><path d="M1.5 15.3h8.5L1.5 26.2h9" fill="none" stroke="#b0b0b0" stroke-width="1.3"/><path d="M13.3 7.5h15l-5.5 6.5v8h-4v-8z" fill="#f3f3f3" stroke="#b0b0b0" stroke-width="1.3" stroke-linejoin="round"/></svg>
<span class="t" style="left:1204.60px;top:106.97px;font-size:12.50px;color:#a6a6a6;font-weight:400;font-family:'Liberation Sans',sans-serif;transform:scaleX(0.9123);">Classificar</span>
<span class="t" style="left:1207.00px;top:122.97px;font-size:12.50px;color:#a6a6a6;font-weight:400;font-family:'Liberation Sans',sans-serif;transform:scaleX(0.9676);">e Filtrar</span>
<svg style="left:1249px;top:127px;" width="7" height="4" viewBox="0 0 7 4"><path d="M0 0h6.5l-3.25 3.5z" fill="#bbb"/></svg>
<svg style="left:1276px;top:70px;" width="32" height="32" viewBox="0 0 32 32"><circle cx="20.5" cy="12" r="10.3" fill="#fff" stroke="#333" stroke-width="1.4"/><path d="M13 19.5L2.5 30" stroke="#333" stroke-width="1.5"/></svg>
<span class="t" style="left:1266.40px;top:106.97px;font-size:12.50px;color:#3b3a39;font-weight:400;font-family:'Liberation Sans',sans-serif;transform:scaleX(0.9032);">Localizar e</span>
<span class="t" style="left:1262.30px;top:122.97px;font-size:12.50px;color:#3b3a39;font-weight:400;font-family:'Liberation Sans',sans-serif;transform:scaleX(0.8802);">Selecionar</span>
<svg style="left:1317px;top:127px;" width="7" height="4" viewBox="0 0 7 4"><path d="M0 0h6.5l-3.25 3.5z" fill="#555"/></svg>
<div style="left:0px;top:160px;width:1366px;height:47px;background:#e6e6e6"></div>
<div style="left:0px;top:160px;width:1366px;height:6px;background:linear-gradient(#cfcfcf,#e6e6e6)"></div>
<div style="left:5px;top:171px;width:102px;height:26px;background:#fff;border:1px solid #c6c6c6"></div>
<span class="t" style="left:12.50px;top:177.95px;font-size:13.00px;color:#222;font-weight:400;font-family:'Liberation Sans',sans-serif;transform:scaleX(0.9430);">D12</span>
<svg style="left:93px;top:181px;" width="8" height="5" viewBox="0 0 8 5"><path d="M0.5 0.5h7l-3.5 4z" fill="#777"/></svg>
<div style="left:121px;top:178.5px;width:2px;height:2px;background:#999;border-radius:1px"></div>
<div style="left:121px;top:182.5px;width:2px;height:2px;background:#999;border-radius:1px"></div>
<div style="left:121px;top:186.5px;width:2px;height:2px;background:#999;border-radius:1px"></div>
<div style="left:137px;top:171px;width:110px;height:26px;background:#fff;border:1px solid #c6c6c6"></div>
<svg style="left:150px;top:180px;" width="12" height="10" viewBox="0 0 12 10"><path d="M1 1l9.5 8.5M10.5 1L1 9.5" stroke="#c0c0c0" stroke-width="1.4"/></svg>
<svg style="left:185px;top:179px;" width="15" height="11" viewBox="0 0 15 11"><path d="M1.5 6l4 4 8.5-8.5" fill="none" stroke="#c0c0c0" stroke-width="1.8"/></svg>
<span class="t" style="left:222.50px;top:177.25px;font-size:13.00px;color:#666;font-weight:700;font-family:'Liberation Serif',sans-serif;font-style:italic">f</span>
<span class="t" style="left:228.30px;top:180.80px;font-size:10.00px;color:#666;font-weight:700;font-family:'Liberation Serif',sans-serif;font-style:italic">x</span>
<div style="left:250px;top:171px;width:1110px;height:26px;background:#fff;border:1px solid #c6c6c6"></div>
<svg style="left:1347px;top:180px;" width="10" height="7" viewBox="0 0 10 7"><path d="M1.5 1.5l3.5 3.5 3.5-3.5" fill="none" stroke="#666" stroke-width="1.5"/></svg>
<div style="left:0px;top:207px;width:1344px;height:19px;background:#e6e6e6"></div>
<div style="left:0px;top:225px;width:1344px;height:1px;background:#ababab"></div>
<svg style="left:9px;top:210px;" width="13" height="13" viewBox="0 0 13 13"><path d="M12 0.5V12.5H0.5z" fill="#b4b4b4"/></svg>
<div style="left:40px;top:207px;width:1px;height:18px;background:#b6b6b6"></div>
<div style="left:50px;top:207px;width:1px;height:18px;background:#b6b6b6"></div>
<div style="left:206px;top:207px;width:1px;height:18px;background:#b6b6b6"></div>
<div style="left:206px;top:207px;width:123px;height:19px;background:#d2d2d2"></div>
<div style="left:206px;top:224px;width:123px;height:2px;background:#217346"></div>
<div style="left:329px;top:207px;width:1px;height:18px;background:#b6b6b6"></div>
<div style="left:455px;top:207px;width:1px;height:18px;background:#b6b6b6"></div>
<div style="left:562px;top:207px;width:1px;height:18px;background:#b6b6b6"></div>
<div style="left:716px;top:207px;width:1px;height:18px;background:#b6b6b6"></div>
<div style="left:730px;top:207px;width:1px;height:18px;background:#b6b6b6"></div>
<div style="left:766px;top:207px;width:1px;height:18px;background:#b6b6b6"></div>
<div style="left:906px;top:207px;width:1px;height:18px;background:#b6b6b6"></div>
<div style="left:926px;top:207px;width:1px;height:18px;background:#b6b6b6"></div>
<div style="left:1066px;top:207px;width:1px;height:18px;background:#b6b6b6"></div>
<div style="left:1143px;top:207px;width:1px;height:18px;background:#b6b6b6"></div>
<div style="left:1220px;top:207px;width:1px;height:18px;background:#b6b6b6"></div>
<div style="left:1297px;top:207px;width:1px;height:18px;background:#b6b6b6"></div>
<div style="left:1374px;top:207px;width:1px;height:18px;background:#b6b6b6"></div>
<div style="left:25px;top:207px;width:1px;height:19px;background:#b6b6b6"></div>
<div style="left:0px;top:226px;width:25px;height:491px;background:#e6e6e6"></div>
<div style="left:25px;top:226px;width:1px;height:491px;background:#ababab"></div>
<div style="left:0px;top:272px;width:25px;height:1px;background:#b6b6b6"></div>
<div style="left:0px;top:308px;width:25px;height:1px;background:#b6b6b6"></div>
<div style="left:0px;top:326px;width:25px;height:1px;background:#b6b6b6"></div>
<div style="left:0px;top:362px;width:25px;height:1px;background:#b6b6b6"></div>
<div style="left:0px;top:398px;width:25px;height:1px;background:#b6b6b6"></div>
<div style="left:0px;top:434px;width:25px;height:1px;background:#b6b6b6"></div>
<div style="left:0px;top:470px;width:25px;height:1px;background:#b6b6b6"></div>
<div style="left:0px;top:506px;width:25px;height:1px;background:#b6b6b6"></div>
<div style="left:0px;top:542px;width:25px;height:1px;background:#b6b6b6"></div>
<div style="left:0px;top:578px;width:25px;height:1px;background:#b6b6b6"></div>
<div style="left:0px;top:614px;width:25px;height:1px;background:#b6b6b6"></div>
<div style="left:0px;top:615px;width:25px;height:35px;background:#d2d2d2"></div>
<div style="left:24px;top:615px;width:2px;height:35px;background:#217346"></div>
<div style="left:0px;top:650px;width:25px;height:1px;background:#b6b6b6"></div>
<div style="left:0px;top:686px;width:25px;height:1px;background:#b6b6b6"></div>
<div style="left:0px;top:722px;width:25px;height:1px;background:#b6b6b6"></div>
<div style="left:26px;top:226px;width:1318px;height:491px;background:#fff"></div>
<div class="t" style="left:25px;top:209.95px;width:15px;text-align:center;font-size:13px;color:#222">A</div>
<div class="t" style="left:40px;top:209.95px;width:10px;text-align:center;font-size:13px;color:#222">B</div>
<div class="t" style="left:50px;top:209.95px;width:156px;text-align:center;font-size:13px;color:#222">C</div>
<div class="t" style="left:206px;top:209.95px;width:123px;text-align:center;font-size:13px;color:#217346">D</div>
<div class="t" style="left:329px;top:209.95px;width:126px;text-align:center;font-size:13px;color:#222">E</div>
<div class="t" style="left:455px;top:209.95px;width:107px;text-align:center;font-size:13px;color:#222">F</div>
<div class="t" style="left:562px;top:209.95px;width:154px;text-align:center;font-size:13px;color:#222">G</div>
<div class="t" style="left:716px;top:209.95px;width:14px;text-align:center;font-size:13px;color:#222">H</div>
<div class="t" style="left:730px;top:209.95px;width:36px;text-align:center;font-size:13px;color:#222">I</div>
<div class="t" style="left:766px;top:209.95px;width:140px;text-align:center;font-size:13px;color:#222">J</div>
<div class="t" style="left:906px;top:209.95px;width:20px;text-align:center;font-size:13px;color:#222">K</div>
<div class="t" style="left:926px;top:209.95px;width:140px;text-align:center;font-size:13px;color:#222">L</div>
<div class="t" style="left:1066px;top:209.95px;width:77px;text-align:center;font-size:13px;color:#222">M</div>
<div class="t" style="left:1143px;top:209.95px;width:77px;text-align:center;font-size:13px;color:#222">N</div>
<div class="t" style="left:1220px;top:209.95px;width:77px;text-align:center;font-size:13px;color:#222">O</div>
<div class="t" style="left:1297px;top:209.95px;width:77px;text-align:center;font-size:13px;color:#222">P</div>
<span class="t" style="left:9.20px;top:257.28px;font-size:13.20px;color:#222;font-weight:400;font-family:'Liberation Sans',sans-serif;">1</span>
<span class="t" style="left:9.20px;top:293.28px;font-size:13.20px;color:#222;font-weight:400;font-family:'Liberation Sans',sans-serif;">2</span>
<span class="t" style="left:9.20px;top:311.28px;font-size:13.20px;color:#222;font-weight:400;font-family:'Liberation Sans',sans-serif;">3</span>
<span class="t" style="left:9.20px;top:347.28px;font-size:13.20px;color:#222;font-weight:400;font-family:'Liberation Sans',sans-serif;">4</span>
<span class="t" style="left:9.20px;top:383.28px;font-size:13.20px;color:#222;font-weight:400;font-family:'Liberation Sans',sans-serif;">5</span>
<span class="t" style="left:9.20px;top:419.28px;font-size:13.20px;color:#222;font-weight:400;font-family:'Liberation Sans',sans-serif;">6</span>
<span class="t" style="left:9.20px;top:455.28px;font-size:13.20px;color:#222;font-weight:400;font-family:'Liberation Sans',sans-serif;">7</span>
<span class="t" style="left:9.20px;top:491.28px;font-size:13.20px;color:#222;font-weight:400;font-family:'Liberation Sans',sans-serif;">8</span>
<span class="t" style="left:9.20px;top:527.28px;font-size:13.20px;color:#222;font-weight:400;font-family:'Liberation Sans',sans-serif;">9</span>
<span class="t" style="left:5.60px;top:563.28px;font-size:13.20px;color:#222;font-weight:400;font-family:'Liberation Sans',sans-serif;">10</span>
<span class="t" style="left:5.60px;top:599.28px;font-size:13.20px;color:#222;font-weight:400;font-family:'Liberation Sans',sans-serif;">11</span>
<span class="t" style="left:5.60px;top:635.28px;font-size:13.20px;color:#217346;font-weight:400;font-family:'Liberation Sans',sans-serif;">12</span>
<span class="t" style="left:5.60px;top:671.28px;font-size:13.20px;color:#222;font-weight:400;font-family:'Liberation Sans',sans-serif;">13</span>
<span class="t" style="left:5.60px;top:707.28px;font-size:13.20px;color:#222;font-weight:400;font-family:'Liberation Sans',sans-serif;">14</span>
<div style="left:26px;top:226px;width:1318px;height:46px;background:#404040"></div>
<div style="left:154px;top:226px;width:97px;height:46px;background:#6699cc"></div>
<div style="left:26px;top:272px;width:1318px;height:36px;background:#6699cc"></div>
<div style="left:26px;top:308px;width:1318px;height:1px;background:#bcbcbc"></div>
<svg style="left:40px;top:235px;" width="22" height="30" viewBox="0 0 22 30"><path d="M3.5 8.2V7a4 4 0 0 1 4-4h6.5a4 4 0 0 1 4 4v1.2M3.5 9.8v7.7a4 4 0 0 0 4 4h6.5a4 4 0 0 0 4-4V9.8" fill="none" stroke="#fff" stroke-width="1.5"/><path d="M7.8 23.3h6M8.3 24.8h5M9.3 26.3h3" stroke="#f0f0f0" stroke-width="1.1"/></svg>
<span class="t" style="left:63.60px;top:240.76px;font-size:14.40px;color:#e8e8e8;font-weight:400;font-family:'Liberation Sans',sans-serif;transform:scaleX(0.8533);">LUZ</span>
<div style="left:91.5px;top:240.5px;width:1.2px;height:15px;background:#8a8a8a"></div>
<span class="t" style="left:96.00px;top:242.63px;font-size:6.20px;color:#d0d0d0;font-weight:400;font-family:'Liberation Sans',sans-serif;transform:scaleX(0.9035);">Planilhas</span>
<span class="t" style="left:96.00px;top:248.93px;font-size:6.20px;color:#d0d0d0;font-weight:400;font-family:'Liberation Sans',sans-serif;transform:scaleX(0.9139);">Empresariais</span>
<span class="t" style="left:169.00px;top:244.61px;font-size:11.40px;color:#fff;font-weight:700;font-family:'Liberation Sans',sans-serif;transform:scaleX(0.9216);">CADASTROS</span>
<span class="t" style="left:264.60px;top:244.61px;font-size:11.40px;color:#fff;font-weight:700;font-family:'Liberation Sans',sans-serif;transform:scaleX(0.9505);">PROMOÇÕES</span>
<span class="t" style="left:366.00px;top:244.61px;font-size:11.40px;color:#fff;font-weight:700;font-family:'Liberation Sans',sans-serif;transform:scaleX(0.9305);">RELATÓRIOS</span>
<span class="t" style="left:463.00px;top:244.61px;font-size:11.40px;color:#fff;font-weight:700;font-family:'Liberation Sans',sans-serif;transform:scaleX(0.9407);">DASHBOARDS</span>
<span class="t" style="left:566.60px;top:244.61px;font-size:11.40px;color:#fff;font-weight:700;font-family:'Liberation Sans',sans-serif;transform:scaleX(0.9265);">INSTRUÇÕES</span>
<div style="left:51.5px;top:275.5px;width:30px;height:31px;background:#fff;border-radius:3px"></div>
<svg style="left:56px;top:281px;" width="21" height="21" viewBox="0 0 21 21"><circle cx="10.3" cy="9.9" r="8.6" fill="none" stroke="#e81c24" stroke-width="2"/><path d="M7.6 5.6v8.6l7-4.3z" fill="#e81c24"/></svg>
<div style="left:129px;top:280px;width:98px;height:28px;background:#fff"></div>
<span class="t" style="left:155.90px;top:291.13px;font-size:10.90px;color:#404040;font-weight:700;font-family:'Liberation Sans',sans-serif;transform:scaleX(0.9370);">CARGOS</span>
<span class="t" style="left:256.00px;top:290.63px;font-size:10.90px;color:#fff;font-weight:700;font-family:'Liberation Sans',sans-serif;transform:scaleX(0.9453);">SALÁRIOS</span>
<span class="t" style="left:356.80px;top:290.63px;font-size:10.90px;color:#fff;font-weight:700;font-family:'Liberation Sans',sans-serif;transform:scaleX(1.0130);">FUNCIONÁRIOS</span>
<div style="left:562px;top:362px;width:154px;height:355px;background:#f2f2f2"></div>
<div style="left:50px;top:363px;width:1px;height:354px;background:#d9d9d9"></div>
<div style="left:206px;top:363px;width:1px;height:354px;background:#d9d9d9"></div>
<div style="left:329px;top:363px;width:1px;height:354px;background:#d9d9d9"></div>
<div style="left:455px;top:363px;width:1px;height:354px;background:#d9d9d9"></div>
<div style="left:562px;top:363px;width:1px;height:354px;background:#d9d9d9"></div>
<div style="left:716px;top:363px;width:1px;height:354px;background:#d9d9d9"></div>
<div style="left:50px;top:398px;width:667px;height:1px;background:#d9d9d9"></div>
<div style="left:50px;top:434px;width:667px;height:1px;background:#d9d9d9"></div>
<div style="left:50px;top:470px;width:667px;height:1px;background:#d9d9d9"></div>
<div style="left:50px;top:506px;width:667px;height:1px;background:#d9d9d9"></div>
<div style="left:50px;top:542px;width:667px;height:1px;background:#d9d9d9"></div>
<div style="left:50px;top:578px;width:667px;height:1px;background:#d9d9d9"></div>
<div style="left:50px;top:614px;width:667px;height:1px;background:#d9d9d9"></div>
<div style="left:50px;top:650px;width:667px;height:1px;background:#d9d9d9"></div>
<div style="left:50px;top:686px;width:667px;height:1px;background:#d9d9d9"></div>
<div style="left:52px;top:328px;width:153px;height:35px;background:#d9d9d9"></div>
<span class="t" style="left:63.50px;top:340.47px;font-size:11.80px;color:#404040;font-weight:700;font-family:'Liberation Sans',sans-serif;transform:scaleX(0.9595);">Nome do cargo</span>
<div style="left:189px;top:344px;width:17px;height:17px;background:linear-gradient(#fff,#edf0f4);border:1px solid #a3aab5"></div>
<svg style="left:193px;top:350.5px;" width="9" height="5" viewBox="0 0 9 5"><path d="M0.5 0.5h8l-4 4z" fill="#595959"/></svg>
<div style="left:208px;top:328px;width:120px;height:35px;background:#d9d9d9"></div>
<span class="t" style="left:219.50px;top:340.47px;font-size:11.80px;color:#404040;font-weight:700;font-family:'Liberation Sans',sans-serif;transform:scaleX(0.9422);">Área do Cargo</span>
<div style="left:312px;top:344px;width:17px;height:17px;background:linear-gradient(#fff,#edf0f4);border:1px solid #a3aab5"></div>
<svg style="left:316px;top:350.5px;" width="9" height="5" viewBox="0 0 9 5"><path d="M0.5 0.5h8l-4 4z" fill="#595959"/></svg>
<div style="left:331px;top:328px;width:123px;height:35px;background:#d9d9d9"></div>
<span class="t" style="left:342.50px;top:340.47px;font-size:11.80px;color:#404040;font-weight:700;font-family:'Liberation Sans',sans-serif;transform:scaleX(0.9355);">Grupo do Cargo</span>
<div style="left:438px;top:344px;width:17px;height:17px;background:linear-gradient(#fff,#edf0f4);border:1px solid #a3aab5"></div>
<svg style="left:442px;top:350.5px;" width="9" height="5" viewBox="0 0 9 5"><path d="M0.5 0.5h8l-4 4z" fill="#595959"/></svg>
<div style="left:457px;top:328px;width:104px;height:35px;background:#d9d9d9"></div>
<span class="t" style="left:468.50px;top:340.47px;font-size:11.80px;color:#404040;font-weight:700;font-family:'Liberation Sans',sans-serif;transform:scaleX(0.8976);">Faixa Salarial</span>
<div style="left:545px;top:344px;width:17px;height:17px;background:linear-gradient(#fff,#edf0f4);border:1px solid #a3aab5"></div>
<svg style="left:549px;top:350.5px;" width="9" height="5" viewBox="0 0 9 5"><path d="M0.5 0.5h8l-4 4z" fill="#595959"/></svg>
<div style="left:564px;top:328px;width:151px;height:35px;background:#d9d9d9"></div>
<span class="t" style="left:575.50px;top:340.47px;font-size:11.80px;color:#404040;font-weight:700;font-family:'Liberation Sans',sans-serif;transform:scaleX(0.8221);">Salário Bruto</span>
<div style="left:699px;top:344px;width:17px;height:17px;background:linear-gradient(#fff,#edf0f4);border:1px solid #a3aab5"></div>
<svg style="left:703px;top:350.5px;" width="9" height="5" viewBox="0 0 9 5"><path d="M0.5 0.5h8l-4 4z" fill="#595959"/></svg>
<span class="t" style="left:63.50px;top:375.97px;font-size:11.80px;color:#000;font-weight:400;font-family:'Liberation Sans',sans-serif;transform:scaleX(1.0540);">Estagiário</span>
<span class="t" style="left:219.50px;top:375.97px;font-size:11.80px;color:#000;font-weight:400;font-family:'Liberation Sans',sans-serif;transform:scaleX(1.0831);">Marketing</span>
<span class="t" style="left:342.50px;top:375.97px;font-size:11.80px;color:#000;font-weight:400;font-family:'Liberation Sans',sans-serif;transform:scaleX(1.0735);">Operacional</span>
<span class="t" style="left:468.50px;top:375.97px;font-size:11.80px;color:#000;font-weight:400;font-family:'Liberation Sans',sans-serif;transform:scaleX(1.0252);">Faixa I</span>
<span class="t" style="left:575.50px;top:375.97px;font-size:11.80px;color:#000;font-weight:400;font-family:'Liberation Sans',sans-serif;transform:scaleX(1.0174);">R$ 800,00</span>
<span class="t" style="left:63.50px;top:411.97px;font-size:11.80px;color:#000;font-weight:400;font-family:'Liberation Sans',sans-serif;transform:scaleX(1.0648);">Analista de Marketing</span>
<span class="t" style="left:219.50px;top:411.97px;font-size:11.80px;color:#000;font-weight:400;font-family:'Liberation Sans',sans-serif;transform:scaleX(1.0831);">Marketing</span>
<span class="t" style="left:342.50px;top:411.97px;font-size:11.80px;color:#000;font-weight:400;font-family:'Liberation Sans',sans-serif;transform:scaleX(1.0790);">Analista</span>
<span class="t" style="left:468.50px;top:411.97px;font-size:11.80px;color:#000;font-weight:400;font-family:'Liberation Sans',sans-serif;transform:scaleX(1.0494);">Faixa II</span>
<span class="t" style="left:575.50px;top:411.97px;font-size:11.80px;color:#000;font-weight:400;font-family:'Liberation Sans',sans-serif;transform:scaleX(1.0096);">R$ 2.600,00</span>
<span class="t" style="left:63.50px;top:447.97px;font-size:11.80px;color:#000;font-weight:400;font-family:'Liberation Sans',sans-serif;transform:scaleX(1.0236);">Gerente de Marketing</span>
<span class="t" style="left:219.50px;top:447.97px;font-size:11.80px;color:#000;font-weight:400;font-family:'Liberation Sans',sans-serif;transform:scaleX(1.0831);">Marketing</span>
<span class="t" style="left:342.50px;top:447.97px;font-size:11.80px;color:#000;font-weight:400;font-family:'Liberation Sans',sans-serif;transform:scaleX(1.0089);">Gerência</span>
<span class="t" style="left:468.50px;top:447.97px;font-size:11.80px;color:#000;font-weight:400;font-family:'Liberation Sans',sans-serif;transform:scaleX(1.0252);">Faixa I</span>
<span class="t" style="left:575.50px;top:447.97px;font-size:11.80px;color:#000;font-weight:400;font-family:'Liberation Sans',sans-serif;transform:scaleX(1.0096);">R$ 4.800,00</span>
<span class="t" style="left:63.50px;top:483.97px;font-size:11.80px;color:#000;font-weight:400;font-family:'Liberation Sans',sans-serif;transform:scaleX(1.0620);">Diretor de Marketing</span>
<span class="t" style="left:219.50px;top:483.97px;font-size:11.80px;color:#000;font-weight:400;font-family:'Liberation Sans',sans-serif;transform:scaleX(1.0831);">Marketing</span>
<span class="t" style="left:342.50px;top:483.97px;font-size:11.80px;color:#000;font-weight:400;font-family:'Liberation Sans',sans-serif;transform:scaleX(1.1123);">Diretoria</span>
<span class="t" style="left:468.50px;top:483.97px;font-size:11.80px;color:#000;font-weight:400;font-family:'Liberation Sans',sans-serif;transform:scaleX(1.0000);">Faixa V</span>
<span class="t" style="left:575.50px;top:483.97px;font-size:11.80px;color:#000;font-weight:400;font-family:'Liberation Sans',sans-serif;transform:scaleX(1.0163);">R$ 16.500,00</span>
<div style="left:766px;top:363px;width:1px;height:354px;background:#d9d9d9"></div>
<div style="left:906px;top:363px;width:1px;height:354px;background:#d9d9d9"></div>
<div style="left:766px;top:398px;width:141px;height:1px;background:#d9d9d9"></div>
<div style="left:766px;top:434px;width:141px;height:1px;background:#d9d9d9"></div>
<div style="left:766px;top:470px;width:141px;height:1px;background:#d9d9d9"></div>
<div style="left:766px;top:506px;width:141px;height:1px;background:#d9d9d9"></div>
<div style="left:766px;top:542px;width:141px;height:1px;background:#d9d9d9"></div>
<div style="left:766px;top:578px;width:141px;height:1px;background:#d9d9d9"></div>
<div style="left:766px;top:614px;width:141px;height:1px;background:#d9d9d9"></div>
<div style="left:766px;top:650px;width:141px;height:1px;background:#d9d9d9"></div>
<div style="left:766px;top:686px;width:141px;height:1px;background:#d9d9d9"></div>
<div style="left:768px;top:328px;width:137px;height:35px;background:#d9d9d9"></div>
<span class="t" style="left:779.50px;top:340.47px;font-size:11.80px;color:#404040;font-weight:700;font-family:'Liberation Sans',sans-serif;transform:scaleX(0.9250);">Grupos de Cargos</span>
<span class="t" style="left:779.80px;top:375.97px;font-size:11.80px;color:#000;font-weight:400;font-family:'Liberation Sans',sans-serif;transform:scaleX(1.0814);">Analista</span>
<span class="t" style="left:779.80px;top:411.97px;font-size:11.80px;color:#000;font-weight:400;font-family:'Liberation Sans',sans-serif;transform:scaleX(1.0232);">Assistente</span>
<span class="t" style="left:779.80px;top:447.97px;font-size:11.80px;color:#000;font-weight:400;font-family:'Liberation Sans',sans-serif;transform:scaleX(1.1296);">Auxiliar</span>
<span class="t" style="left:779.80px;top:483.97px;font-size:11.80px;color:#000;font-weight:400;font-family:'Liberation Sans',sans-serif;transform:scaleX(1.0304);">Coordenação</span>
<span class="t" style="left:779.80px;top:519.97px;font-size:11.80px;color:#000;font-weight:400;font-family:'Liberation Sans',sans-serif;transform:scaleX(1.1145);">Diretoria</span>
<span class="t" style="left:779.80px;top:555.97px;font-size:11.80px;color:#000;font-weight:400;font-family:'Liberation Sans',sans-serif;transform:scaleX(1.0193);">Gerência</span>
<span class="t" style="left:779.80px;top:591.97px;font-size:11.80px;color:#000;font-weight:400;font-family:'Liberation Sans',sans-serif;transform:scaleX(1.0735);">Operacional</span>
<span class="t" style="left:779.80px;top:627.97px;font-size:11.80px;color:#000;font-weight:400;font-family:'Liberation Sans',sans-serif;transform:scaleX(1.0283);">Supervisão</span>
<span class="t" style="left:779.80px;top:663.97px;font-size:11.80px;color:#000;font-weight:400;font-family:'Liberation Sans',sans-serif;transform:scaleX(1.0094);">Técnico</span>
<span class="t" style="left:779.80px;top:699.97px;font-size:11.80px;color:#000;font-weight:400;font-family:'Liberation Sans',sans-serif;transform:scaleX(0.8889);">-</span>
<div style="left:925px;top:363px;width:1px;height:354px;background:#d9d9d9"></div>
<div style="left:1066px;top:363px;width:1px;height:354px;background:#d9d9d9"></div>
<div style="left:925px;top:398px;width:142px;height:1px;background:#d9d9d9"></div>
<div style="left:925px;top:434px;width:142px;height:1px;background:#d9d9d9"></div>
<div style="left:925px;top:470px;width:142px;height:1px;background:#d9d9d9"></div>
<div style="left:925px;top:506px;width:142px;height:1px;background:#d9d9d9"></div>
<div style="left:925px;top:542px;width:142px;height:1px;background:#d9d9d9"></div>
<div style="left:925px;top:578px;width:142px;height:1px;background:#d9d9d9"></div>
<div style="left:925px;top:614px;width:142px;height:1px;background:#d9d9d9"></div>
<div style="left:925px;top:650px;width:142px;height:1px;background:#d9d9d9"></div>
<div style="left:925px;top:686px;width:142px;height:1px;background:#d9d9d9"></div>
<div style="left:927px;top:328px;width:138px;height:35px;background:#d9d9d9"></div>
<span class="t" style="left:938.50px;top:340.47px;font-size:11.80px;color:#404040;font-weight:700;font-family:'Liberation Sans',sans-serif;transform:scaleX(0.9393);">Áreas da Empresa</span>
<span class="t" style="left:938.80px;top:375.97px;font-size:11.80px;color:#000;font-weight:400;font-family:'Liberation Sans',sans-serif;transform:scaleX(1.0754);">Marketing</span>
<span class="t" style="left:938.80px;top:411.97px;font-size:11.80px;color:#000;font-weight:400;font-family:'Liberation Sans',sans-serif;transform:scaleX(1.0039);">Recursos Humanos</span>
<span class="t" style="left:938.80px;top:447.97px;font-size:11.80px;color:#000;font-weight:400;font-family:'Liberation Sans',sans-serif;transform:scaleX(1.0636);">Financeiro</span>
<span class="t" style="left:938.80px;top:483.97px;font-size:11.80px;color:#000;font-weight:400;font-family:'Liberation Sans',sans-serif;transform:scaleX(1.0455);">Produção</span>
<span class="t" style="left:938.80px;top:519.97px;font-size:11.80px;color:#000;font-weight:400;font-family:'Liberation Sans',sans-serif;transform:scaleX(0.8889);">-</span>
<span class="t" style="left:938.80px;top:555.97px;font-size:11.80px;color:#000;font-weight:400;font-family:'Liberation Sans',sans-serif;transform:scaleX(0.8889);">-</span>
<span class="t" style="left:938.80px;top:591.97px;font-size:11.80px;color:#000;font-weight:400;font-family:'Liberation Sans',sans-serif;transform:scaleX(0.8889);">-</span>
<span class="t" style="left:938.80px;top:627.97px;font-size:11.80px;color:#000;font-weight:400;font-family:'Liberation Sans',sans-serif;transform:scaleX(0.8889);">-</span>
<span class="t" style="left:938.80px;top:663.97px;font-size:11.80px;color:#000;font-weight:400;font-family:'Liberation Sans',sans-serif;transform:scaleX(0.8889);">-</span>
<span class="t" style="left:938.80px;top:699.97px;font-size:11.80px;color:#000;font-weight:400;font-family:'Liberation Sans',sans-serif;transform:scaleX(0.8889);">-</span>
<div style="left:205px;top:613px;width:126px;height:39px;border:2px solid #217346"></div>
<div style="left:326px;top:647px;width:7px;height:7px;background:#217346;border:1px solid #fff"></div>
<div style="left:330px;top:632px;width:17px;height:17px;background:linear-gradient(#fff,#edf0f4);border:1px solid #a3aab5"></div>
<svg style="left:334px;top:638.5px;" width="9" height="5" viewBox="0 0 9 5"><path d="M0.5 0.5h8l-4 4z" fill="#595959"/></svg>
<div style="left:1344px;top:207px;width:22px;height:510px;background:#e6e6e6"></div>
<div style="left:1344px;top:226px;width:1px;height:491px;background:#c6c6c6"></div>
<div style="left:1348px;top:209px;width:15px;height:15px;background:#fff;border:1px solid #ababab"></div>
<svg style="left:1351px;top:214px;" width="9" height="5" viewBox="0 0 9 5"><path d="M0.5 4.5h8l-4-4z" fill="#555"/></svg>
<div style="left:1348px;top:241px;width:15px;height:461px;background:#dadada"></div>
<div style="left:1348px;top:224px;width:15px;height:17px;background:#fff;border:1px solid #ababab"></div>
<div style="left:1348px;top:702px;width:15px;height:15px;background:#fff;border:1px solid #ababab"></div>
<svg style="left:1351px;top:707px;" width="9" height="5" viewBox="0 0 9 5"><path d="M0.5 0.5h8l-4 4z" fill="#555"/></svg>
<div style="left:0px;top:717px;width:1366px;height:28px;background:#e6e6e6"></div>
<div style="left:0px;top:716.5px;width:1344px;height:1px;background:#aaa"></div>
<svg style="left:26px;top:725px;" width="6" height="10" viewBox="0 0 6 10"><path d="M5 0.5v9L0.5 5z" fill="#c0c0c0"/></svg>
<svg style="left:55px;top:725px;" width="6" height="10" viewBox="0 0 6 10"><path d="M0.5 0.5v9L5 5z" fill="#c0c0c0"/></svg>
<div style="left:100px;top:717px;width:48px;height:25px;background:#fff;border-left:1px solid #aaa;border-right:1px solid #aaa"></div>
<div style="left:100px;top:739.5px;width:48px;height:2.5px;background:#217346"></div>
<span class="t" style="left:111.00px;top:723.38px;font-size:13.20px;color:#217346;font-weight:700;font-family:'Liberation Sans',sans-serif;transform:scaleX(0.9710);">Cad</span>
<span class="t" style="left:160.00px;top:725.09px;font-size:12.60px;color:#444;font-weight:400;font-family:'Liberation Sans',sans-serif;transform:scaleX(0.9239);">SAL</span>
<span class="t" style="left:206.00px;top:725.09px;font-size:12.60px;color:#444;font-weight:400;font-family:'Liberation Sans',sans-serif;transform:scaleX(0.8992);">Cad_F</span>
<span class="t" style="left:265.00px;top:725.09px;font-size:12.60px;color:#444;font-weight:400;font-family:'Liberation Sans',sans-serif;transform:scaleX(0.9668);">PROMO</span>
<span class="t" style="left:337.00px;top:725.09px;font-size:12.60px;color:#444;font-weight:400;font-family:'Liberation Sans',sans-serif;transform:scaleX(0.8568);">REL_1</span>
<span class="t" style="left:395.00px;top:725.09px;font-size:12.60px;color:#444;font-weight:400;font-family:'Liberation Sans',sans-serif;transform:scaleX(0.8568);">REL_2</span>
<span class="t" style="left:455.00px;top:725.09px;font-size:12.60px;color:#444;font-weight:400;font-family:'Liberation Sans',sans-serif;transform:scaleX(0.8855);">DASH_F</span>
<span class="t" style="left:525.80px;top:725.09px;font-size:12.60px;color:#444;font-weight:400;font-family:'Liberation Sans',sans-serif;transform:scaleX(0.9320);">INI</span>
<span class="t" style="left:568.00px;top:725.09px;font-size:12.60px;color:#444;font-weight:400;font-family:'Liberation Sans',sans-serif;transform:scaleX(1.0153);">DUV</span>
<span class="t" style="left:619.00px;top:725.09px;font-size:12.60px;color:#444;font-weight:400;font-family:'Liberation Sans',sans-serif;transform:scaleX(0.9525);">SUG</span>
<span class="t" style="left:669.30px;top:725.09px;font-size:12.60px;color:#444;font-weight:400;font-family:'Liberation Sans',sans-serif;transform:scaleX(0.8825);">LUZ</span>
<div style="left:194px;top:723px;width:1px;height:18px;background:#999"></div>
<div style="left:253px;top:723px;width:1px;height:18px;background:#999"></div>
<div style="left:325px;top:723px;width:1px;height:18px;background:#999"></div>
<div style="left:383px;top:723px;width:1px;height:18px;background:#999"></div>
<div style="left:441px;top:723px;width:1px;height:18px;background:#999"></div>
<div style="left:513px;top:723px;width:1px;height:18px;background:#999"></div>
<div style="left:555px;top:723px;width:1px;height:18px;background:#999"></div>
<div style="left:607px;top:723px;width:1px;height:18px;background:#999"></div>
<div style="left:656px;top:723px;width:1px;height:18px;background:#999"></div>
<div style="left:703px;top:723px;width:1px;height:18px;background:#999"></div>
<svg style="left:736px;top:722px;" width="18" height="18" viewBox="0 0 18 18"><circle cx="9" cy="9" r="7.8" fill="none" stroke="#666" stroke-width="1.2"/><path d="M9 5v8M5 9h8" stroke="#666" stroke-width="1.3"/></svg>
<div style="left:1127px;top:723.5px;width:2px;height:2px;background:#aaa"></div>
<div style="left:1127px;top:727.5px;width:2px;height:2px;background:#aaa"></div>
<div style="left:1127px;top:731.5px;width:2px;height:2px;background:#aaa"></div>
<div style="left:1144px;top:724px;width:15px;height:15px;background:#fff;border:1px solid #ababab"></div>
<svg style="left:1148px;top:727px;" width="6" height="9" viewBox="0 0 6 9"><path d="M5 0.5v8L0.5 4.5z" fill="#444"/></svg>
<div style="left:1159px;top:724px;width:100px;height:15px;background:#fff;border:1px solid #ababab"></div>
<div style="left:1259px;top:724px;width:68px;height:15px;background:#dadada"></div>
<div style="left:1329px;top:724px;width:15px;height:15px;background:#fff;border:1px solid #ababab"></div>
<svg style="left:1334px;top:727px;" width="6" height="9" viewBox="0 0 6 9"><path d="M0.5 0.5v8L5 4.5z" fill="#444"/></svg>
<div style="left:0px;top:745px;width:1366px;height:21px;background:#f3f2f1"></div>
<div style="left:0px;top:745px;width:1366px;height:1px;background:#dcdcdc"></div>
<svg style="left:7px;top:748px;" width="16" height="16" viewBox="0 0 16 16"><path d="M2.5 7v6.5h11.5V2.5H8" fill="none" stroke="#555" stroke-width="1.2"/><rect x="8" y="1.8" width="6" height="2.2" fill="#555"/><circle cx="4" cy="4" r="2.9" fill="#666"/><path d="M4.3 8.5h1.8M7.5 8.5h1.8M10.7 8.5h1.8M4.3 10.5h1.8M7.5 10.5h1.8M10.7 10.5h1.8M4.3 12.5h1.8M7.5 12.5h1.8M10.7 12.5h1.8" stroke="#555" stroke-width="1"/></svg>
<div style="left:1086px;top:745px;width:38px;height:21px;background:#c8c6c4"></div>
<svg style="left:1096px;top:748px;" width="16" height="16" viewBox="0 0 16 16"><rect x="2.5" y="1.5" width="12" height="12" fill="none" stroke="#707070"/><path d="M2.5 5.5h12M2.5 9.5h12M6.5 1.5v12M10.5 1.5v12" stroke="#707070"/></svg>
<svg style="left:1135px;top:748px;" width="16" height="16" viewBox="0 0 16 16"><rect x="1.5" y="1.5" width="13" height="13" fill="none" stroke="#666"/><rect x="4.5" y="4.5" width="7" height="7" fill="none" stroke="#777"/><path d="M6 6.5h4M6 8.5h4M6 10.5h4" stroke="#888" stroke-width="0.9"/></svg>
<svg style="left:1173px;top:748px;" width="16" height="16" viewBox="0 0 16 16"><rect x="1.5" y="1.5" width="13" height="13" fill="none" stroke="#666"/><path d="M1.5 8.5h5v-7M10.5 1.5v5" fill="none" stroke="#666"/></svg>
<div style="left:1205px;top:755px;width:7px;height:2px;background:#555"></div>
<div style="left:1215px;top:756px;width:100px;height:1px;background:#999"></div>
<div style="left:1258px;top:751px;width:5px;height:11px;background:#6b6b6b"></div>
<div style="left:1265px;top:753px;width:1px;height:6px;background:#999"></div>
<div style="left:1318px;top:755px;width:8px;height:1.6px;background:#555"></div>
<div style="left:1321.2px;top:751.8px;width:1.6px;height:8px;background:#555"></div>
<span class="t" style="left:1337.00px;top:749.97px;font-size:11.80px;color:#444;font-weight:400;font-family:'Liberation Sans',sans-serif;transform:scaleX(0.8889);">90%</span>
<div style="left:0px;top:766px;width:1366px;height:1px;background:#bcbcbc"></div>
<div style="left:0px;top:767px;width:1366px;height:1px;background:#f2f2f2"></div>
<div style="left:0px;top:766px;width:48px;height:2px;background:#2a2a2a"></div>
<div style="left:392px;top:766px;width:297px;height:2px;background:#2a2a2a"></div>
<div style="left:737px;top:766px;width:629px;height:2px;background:#2a2a2a"></div>
</body></html>
